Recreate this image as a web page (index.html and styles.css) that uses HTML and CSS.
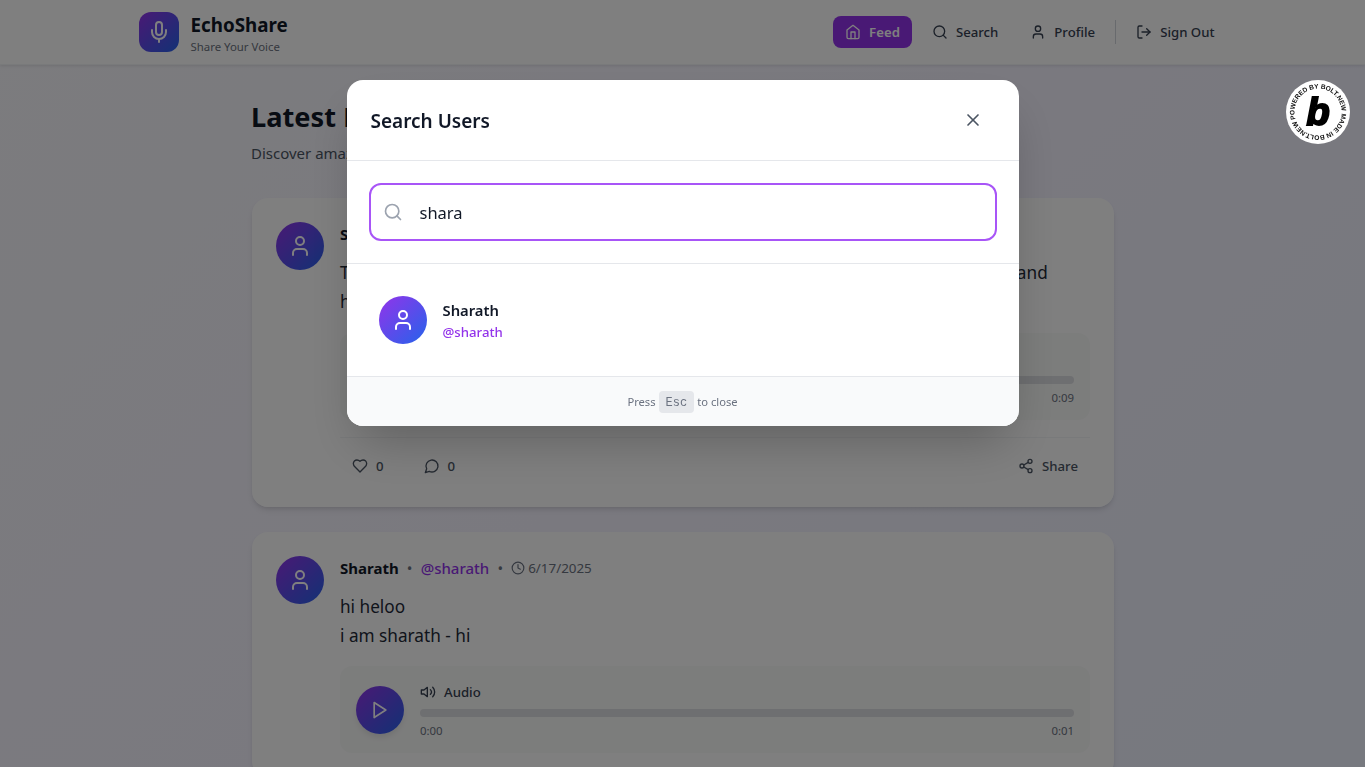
FILE: index.html
```html
<!DOCTYPE html>
<html lang="en">
<head>
  <meta charset="UTF-8">
  <meta name="viewport" content="width=device-width, initial-scale=1.0">
  <title>EchoShare</title>
  <link rel="stylesheet" href="styles.css">
</head>
<body>
  <svg class="sprite" aria-hidden="true">
    <symbol id="i-mic" viewBox="0 0 24 24"><path d="M12 2a3 3 0 0 0-3 3v7a3 3 0 0 0 6 0V5a3 3 0 0 0-3-3Z"/><path d="M19 10v2a7 7 0 0 1-14 0v-2"/><line x1="12" x2="12" y1="19" y2="22"/></symbol>
    <symbol id="i-home" viewBox="0 0 24 24"><path d="m3 9 9-7 9 7v11a2 2 0 0 1-2 2H5a2 2 0 0 1-2-2z"/><polyline points="9 22 9 12 15 12 15 22"/></symbol>
    <symbol id="i-search" viewBox="0 0 24 24"><circle cx="11" cy="11" r="8"/><path d="m21 21-4.3-4.3"/></symbol>
    <symbol id="i-user" viewBox="0 0 24 24"><path d="M19 21v-2a4 4 0 0 0-4-4H9a4 4 0 0 0-4 4v2"/><circle cx="12" cy="7" r="4"/></symbol>
    <symbol id="i-logout" viewBox="0 0 24 24"><path d="M9 21H5a2 2 0 0 1-2-2V5a2 2 0 0 1 2-2h4"/><polyline points="16 17 21 12 16 7"/><line x1="21" x2="9" y1="12" y2="12"/></symbol>
    <symbol id="i-x" viewBox="0 0 24 24"><path d="M18 6 6 18"/><path d="m6 6 12 12"/></symbol>
    <symbol id="i-heart" viewBox="0 0 24 24"><path d="M19 14c1.49-1.46 3-3.21 3-5.5A5.5 5.5 0 0 0 16.5 3c-1.76 0-3 .5-4.5 2-1.5-1.5-2.74-2-4.5-2A5.5 5.5 0 0 0 2 8.5c0 2.3 1.5 4.05 3 5.5l7 7Z"/></symbol>
    <symbol id="i-comment" viewBox="0 0 24 24"><path d="M7.9 20A9 9 0 1 0 4 16.1L2 22Z"/></symbol>
    <symbol id="i-share" viewBox="0 0 24 24"><circle cx="18" cy="5" r="3"/><circle cx="6" cy="12" r="3"/><circle cx="18" cy="19" r="3"/><line x1="8.59" x2="15.42" y1="13.51" y2="17.49"/><line x1="15.41" x2="8.59" y1="6.51" y2="10.49"/></symbol>
    <symbol id="i-clock" viewBox="0 0 24 24"><circle cx="12" cy="12" r="10"/><polyline points="12 6 12 12 16 14"/></symbol>
    <symbol id="i-volume" viewBox="0 0 24 24"><polygon points="11 5 6 9 2 9 2 15 6 15 11 19 11 5"/><path d="M15.54 8.46a5 5 0 0 1 0 7.07"/><path d="M19.07 4.93a10 10 0 0 1 0 14.14"/></symbol>
    <symbol id="i-play" viewBox="0 0 24 24"><polygon points="5 3 19 12 5 21 5 3"/></symbol>
  </svg>

  <header class="topbar">
    <div class="topbar-inner">
      <div class="brand">
        <div class="brand-logo"><svg class="icon icon-24"><use href="#i-mic"/></svg></div>
        <div>
          <div class="brand-name">EchoShare</div>
          <div class="brand-tag">Share Your Voice</div>
        </div>
      </div>
      <nav class="nav">
        <a class="nav-link active"><svg class="icon icon-16"><use href="#i-home"/></svg>Feed</a>
        <a class="nav-link"><svg class="icon icon-16"><use href="#i-search"/></svg>Search</a>
        <a class="nav-link"><svg class="icon icon-16"><use href="#i-user"/></svg>Profile</a>
        <span class="nav-sep"></span>
        <a class="nav-link"><svg class="icon icon-16"><use href="#i-logout"/></svg>Sign Out</a>
      </nav>
    </div>
  </header>

  <main class="feed">
    <h1>Latest Echoes</h1>
    <p class="feed-sub">Discover amazing voices from the community</p>

    <article class="post">
      <div class="avatar"><svg class="icon icon-24"><use href="#i-user"/></svg></div>
      <div class="post-body">
        <div class="post-meta">
          <span class="post-name">Sharath</span><span class="dot">•</span>
          <span class="post-handle">@sharath</span><span class="dot">•</span>
          <span class="post-date"><svg class="icon icon-14"><use href="#i-clock"/></svg>6/17/2025</span>
        </div>
        <p class="post-text">This is my first voice post on EchoShare, trying out my recorder and see how it goes and<br>hope you all enjoy it</p>
        <div class="audio">
          <button class="play"><svg class="icon icon-20"><use href="#i-play"/></svg></button>
          <div class="audio-main">
            <div class="audio-label"><svg class="icon icon-16"><use href="#i-volume"/></svg>Audio</div>
            <div class="track"></div>
            <div class="audio-times"><span>0:00</span><span>0:09</span></div>
          </div>
        </div>
        <div class="actions">
          <button class="action"><svg class="icon icon-16"><use href="#i-heart"/></svg>0</button>
          <button class="action"><svg class="icon icon-16"><use href="#i-comment"/></svg>0</button>
          <button class="action action-share"><svg class="icon icon-16"><use href="#i-share"/></svg>Share</button>
        </div>
      </div>
    </article>

    <article class="post">
      <div class="avatar"><svg class="icon icon-24"><use href="#i-user"/></svg></div>
      <div class="post-body">
        <div class="post-meta">
          <span class="post-name">Sharath</span><span class="dot">•</span>
          <span class="post-handle">@sharath</span><span class="dot">•</span>
          <span class="post-date"><svg class="icon icon-14"><use href="#i-clock"/></svg>6/17/2025</span>
        </div>
        <p class="post-text">hi heloo<br>i am sharath - hi</p>
        <div class="audio">
          <button class="play"><svg class="icon icon-20"><use href="#i-play"/></svg></button>
          <div class="audio-main">
            <div class="audio-label"><svg class="icon icon-16"><use href="#i-volume"/></svg>Audio</div>
            <div class="track"></div>
            <div class="audio-times"><span>0:00</span><span>0:01</span></div>
          </div>
        </div>
      </div>
    </article>
  </main>

  <div class="backdrop">
    <div class="modal">
      <div class="modal-head">
        <h2>Search Users</h2>
        <button class="modal-close"><svg class="icon icon-20"><use href="#i-x"/></svg></button>
      </div>
      <div class="modal-search">
        <div class="search-box">
          <svg class="icon icon-20"><use href="#i-search"/></svg>
          <input type="text" value="shara">
        </div>
      </div>
      <div class="results">
        <div class="result">
          <div class="avatar"><svg class="icon icon-24"><use href="#i-user"/></svg></div>
          <div>
            <div class="result-name">Sharath</div>
            <div class="result-handle">@sharath</div>
          </div>
        </div>
      </div>
      <div class="modal-foot">Press <kbd>Esc</kbd> to close</div>
    </div>
  </div>

  <!-- badge sits above the backdrop -->
  <a class="bolt-badge">
    <svg viewBox="0 0 64 64" width="64" height="64">
      <defs><path id="ring" d="M32 32m-23.5 0a23.5 23.5 0 1 1 47 0a23.5 23.5 0 1 1 -47 0"/></defs>
      <circle cx="32" cy="32" r="32" fill="#fff"/>
      <text class="bolt-ring" transform="rotate(-18 32 32)"><textPath href="#ring" textLength="145">POWERED BY BOLT.NEW MADE IN BOLT.NEW</textPath></text>
      <text class="bolt-b" x="32" y="45" text-anchor="middle">b</text>
    </svg>
  </a>
</body>
</html>
```

FILE: styles.css
```css
* {
  box-sizing: border-box;
}

html, body {
  height: 100%;
}

body {
  margin: 0;
  overflow: hidden;
  font-family: 'Noto Sans', sans-serif;
  color: #111827;
  background: linear-gradient(135deg, #f8f8fc, #f5f3ff 50%, #eef2ff);
}

.sprite {
  display: none;
}

.icon {
  display: block;
  flex: none;
  fill: none;
  stroke: currentColor;
  stroke-width: 2;
  stroke-linecap: round;
  stroke-linejoin: round;
}

.icon-14 { width: 14px; height: 14px; }
.icon-16 { width: 16px; height: 16px; }
.icon-20 { width: 20px; height: 20px; }
.icon-24 { width: 24px; height: 24px; }

button {
  font-family: inherit;
  border: none;
  background: none;
  padding: 0;
}

/* top bar */
.topbar {
  height: 65px;
  background: rgba(255, 255, 255, 0.9);
  border-bottom: 1px solid #f3f4f6;
  box-shadow: 0 1px 3px rgba(0, 0, 0, 0.1);
}

.topbar-inner {
  max-width: 1152px;
  height: 64px;
  margin: 0 auto;
  padding: 0 32px;
  display: flex;
  align-items: center;
  justify-content: space-between;
}

.brand {
  display: flex;
  align-items: center;
  gap: 12px;
}

.brand-logo {
  width: 40px;
  height: 40px;
  border-radius: 12px;
  background: linear-gradient(135deg, #9333ea, #2563eb);
  color: #fff;
  display: flex;
  align-items: center;
  justify-content: center;
}

.brand-name {
  font-size: 18.8px;
  font-weight: 700;
  line-height: 28px;
  margin-top: 2px;
}

.brand-tag {
  font-size: 11.4px;
  line-height: 16px;
  color: #6b7280;
}

.nav {
  display: flex;
  align-items: center;
  gap: 8px;
}

.nav-link {
  display: flex;
  align-items: center;
  gap: 8px;
  height: 32px;
  padding: 0 12px;
  border-radius: 8px;
  font-size: 13.2px;
  font-weight: 500;
  color: #374151;
}

.nav-link.active {
  background: #9333ea;
  color: #fff;
  font-size: 13.2px;
  font-weight: 600;
}

.nav-sep {
  width: 1px;
  height: 24px;
  background: #d1d5db;
}

/* feed */
.feed {
  width: 894px;
  margin-left: 236px;
  padding: 34px 16px 0;
}

h1 {
  margin: 0 0 0 -1px;
  font-size: 27.2px;
  font-weight: 700;
  line-height: 36px;
  color: #111827;
}

.feed-sub {
  margin: 6px 0 33px -1px;
  font-size: 15px;
  line-height: 24px;
  color: #4b5563;
}

.post {
  display: flex;
  gap: 16px;
  padding: 24px;
  margin-bottom: 25px;
  border-radius: 16px;
  background: rgba(255, 255, 255, 0.9);
  box-shadow: 0 4px 6px -1px rgba(0, 0, 0, 0.1), 0 2px 4px -2px rgba(0, 0, 0, 0.1);
}

.avatar {
  flex: none;
  width: 48px;
  height: 48px;
  border-radius: 50%;
  background: linear-gradient(135deg, #9333ea, #2563eb);
  color: #fff;
  display: flex;
  align-items: center;
  justify-content: center;
}

.post-body {
  flex: 1;
  min-width: 0;
}

.post-meta {
  display: flex;
  align-items: center;
  gap: 7px;
  height: 24px;
  margin-bottom: 12px;
}

.post-name {
  font-size: 15px;
  font-weight: 700;
  color: #111827;
}

.dot {
  width: 8px;
  text-align: center;
  font-size: 15px;
  color: #6b7280;
}

.post-handle {
  font-size: 15px;
  font-weight: 500;
  color: #9333ea;
}

.post-date {
  display: flex;
  align-items: center;
  gap: 3px;
  font-size: 13.4px;
  color: #6b7280;
}

.post-text {
  margin: 0 0 16px;
  font-size: 17.2px;
  line-height: 29.25px;
  color: #1f2937;
}

.audio {
  display: flex;
  align-items: center;
  gap: 16px;
  padding: 16px 16px 14px;
  border-radius: 12px;
  background: #f9faf9;
}

.play {
  flex: none;
  width: 48px;
  height: 48px;
  margin-bottom: 1px;
  border-radius: 50%;
  background: linear-gradient(135deg, #9333ea, #2563eb);
  color: #fff;
  display: flex;
  align-items: center;
  justify-content: center;
  box-shadow: 0 4px 6px -1px rgba(0, 0, 0, 0.1);
}

.audio-main {
  flex: 1;
}

.audio-label {
  display: flex;
  align-items: center;
  gap: 8px;
  font-size: 13.2px;
  font-weight: 500;
  line-height: 20px;
  color: #374151;
  margin-bottom: 7px;
}

.track {
  height: 8px;
  border-radius: 4px;
  background: #dcdee2;
}

.audio-times {
  display: flex;
  justify-content: space-between;
  margin-top: 6px;
  font-size: 11.4px;
  line-height: 16px;
  color: #6b7280;
}

.actions {
  display: flex;
  gap: 16px;
  margin-top: 17px;
  padding: 12px 0 1px;
  border-top: 1px solid #f3f4f6;
}

.action {
  display: flex;
  align-items: center;
  gap: 8px;
  height: 32px;
  padding: 0 12px;
  font-size: 13.2px;
  font-weight: 500;
  color: #4b5563;
}

.action-share {
  margin-left: auto;
}

/* search modal */
.backdrop {
  position: fixed;
  inset: 0;
  padding-top: 80px;
  display: flex;
  justify-content: center;
  align-items: flex-start;
  background: rgba(0, 0, 0, 0.5);
}

.modal {
  width: 672px;
  border-radius: 16px;
  overflow: hidden;
  background: #fff;
  box-shadow: 0 25px 50px -12px rgba(0, 0, 0, 0.25);
}

.modal-head {
  display: flex;
  align-items: center;
  justify-content: space-between;
  padding: 18px 24px;
  border-bottom: 1px solid #e5e7eb;
}

h2 {
  margin: 2px 0 0;
  font-size: 19px;
  font-weight: 600;
  color: #111827;
}

.modal-close {
  width: 44px;
  height: 44px;
  display: flex;
  align-items: center;
  justify-content: center;
  color: #4b5563;
}

.modal-search {
  padding: 22px;
  border-bottom: 1px solid #e5e7eb;
}

.search-box {
  height: 58px;
  display: flex;
  align-items: center;
  gap: 17px;
  padding: 0 12px;
  border: 2px solid #a855f7;
  border-radius: 12px;
  color: #9ca3af;
}

.search-box input {
  flex: 1;
  border: none;
  outline: none;
  padding: 0;
  font-family: inherit;
  font-size: 16.5px;
  color: #111827;
}

.results {
  padding: 16px;
}

.result {
  display: flex;
  align-items: center;
  gap: 16px;
  padding: 16px;
}

.result-name {
  font-size: 14.8px;
  font-weight: 600;
  line-height: 24px;
  color: #111827;
}

.result-handle {
  font-size: 13.2px;
  font-weight: 500;
  line-height: 20px;
  color: #9333ea;
}

.modal-foot {
  height: 50px;
  display: flex;
  align-items: center;
  justify-content: center;
  gap: 3px;
  border-top: 1px solid #e5e7eb;
  background: #f9fafb;
  font-size: 11.2px;
  color: #6b7280;
}

kbd {
  height: 22px;
  padding: 0 7px;
  border-radius: 4px;
  background: #e5e7eb;
  font-family: 'Liberation Mono', monospace;
  font-size: 12px;
  line-height: 24px;
  color: #6b7280;
}

/* bolt badge */
.bolt-badge {
  position: fixed;
  top: 80px;
  right: 15px;
  width: 64px;
  height: 64px;
}

.bolt-ring {
  font-family: 'Liberation Sans', sans-serif;
  font-size: 6.6px;
  font-weight: 700;
  fill: #111;
}

.bolt-b {
  font-family: 'Liberation Sans', sans-serif;
  font-size: 38px;
  font-weight: 700;
  font-style: italic;
  fill: #000;
  stroke: #000;
  stroke-width: 2px;
}
```
